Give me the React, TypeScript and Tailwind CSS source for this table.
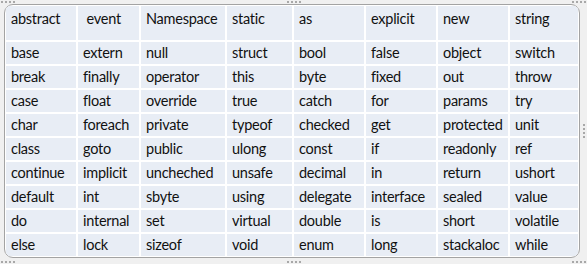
import React from 'react'

const HEADER = ['abstract', '\u00a0event', 'Namespace', 'static', 'as', 'explicit', 'new', 'string']

const ROWS: string[][] = [
  ['base', 'extern', 'null', 'struct', 'bool', 'false', 'object', 'switch'],
  ['break', 'finally', 'operator', 'this', 'byte', 'fixed', 'out', 'throw'],
  ['case', 'float', 'override', 'true', 'catch', 'for', 'params', 'try'],
  ['char', 'foreach', 'private', 'typeof', 'checked', 'get', 'protected', 'unit'],
  ['class', 'goto', 'public', 'ulong', 'const', 'if', 'readonly', 'ref'],
  ['continue', 'implicit', 'uncheched', 'unsafe', 'decimal', 'in', 'return', 'ushort'],
  ['default', 'int', 'sbyte', 'using', 'delegate', 'interface', 'sealed', 'value'],
  ['do', 'internal', 'set', 'virtual', 'double', 'is', 'short', 'volatile'],
  ['else', 'lock', 'sizeof', 'void', 'enum', 'long', 'stackaloc', 'while'],
]

// resize grip: a few tiny dots sitting on the frame
function Grip({ className, vertical }: { className: string; vertical?: boolean }) {
  return (
    <div className={`absolute flex ${vertical ? 'flex-col' : 'flex-row'} gap-[2px] ${className}`}>
      {[0, 1, 2, 3].map((i) => (
        <span key={i} className="w-[2px] h-[2px] bg-[#a8a8a8]" />
      ))}
    </div>
  )
}

export default function App() {
  return (
    <div className="relative w-[587px] h-[264px] bg-[#f0f0f0] pt-[4px] pl-[4px] font-['Lato','Liberation_Sans',sans-serif] text-[14.5px] tracking-[-0.25px] text-[#111]">
      <div className="w-[576px] h-[254px] border border-[#a3a3a3] rounded-[9px] bg-white p-[1px] overflow-hidden">
        <div className="grid grid-cols-[70px_61px_84px_65px_70px_70px_70px_68px] grid-rows-[34px_repeat(9,22px)] gap-[2px] bg-white">
          {HEADER.map((h, i) => (
            <div key={i} className="bg-[#e8edf5] pl-[5px] pt-[4px] leading-[18px] whitespace-pre">
              {h}
            </div>
          ))}
          {ROWS.flat().map((w, i) => (
            <div key={i} className="bg-[#e8edf5] pl-[5px] flex items-center leading-[18px]">
              {w}
            </div>
          ))}
        </div>
      </div>

      <Grip className="left-[1px] top-[1px]" />
      <Grip className="left-[287px] top-[1px]" />
      <Grip className="right-[1px] top-[1px]" />
      <Grip className="right-[2px] top-[124px]" vertical />
      <Grip className="left-[1px] bottom-[1px]" />
      <Grip className="left-[287px] bottom-[1px]" />
      <Grip className="right-[1px] bottom-[1px]" />
    </div>
  )
}
